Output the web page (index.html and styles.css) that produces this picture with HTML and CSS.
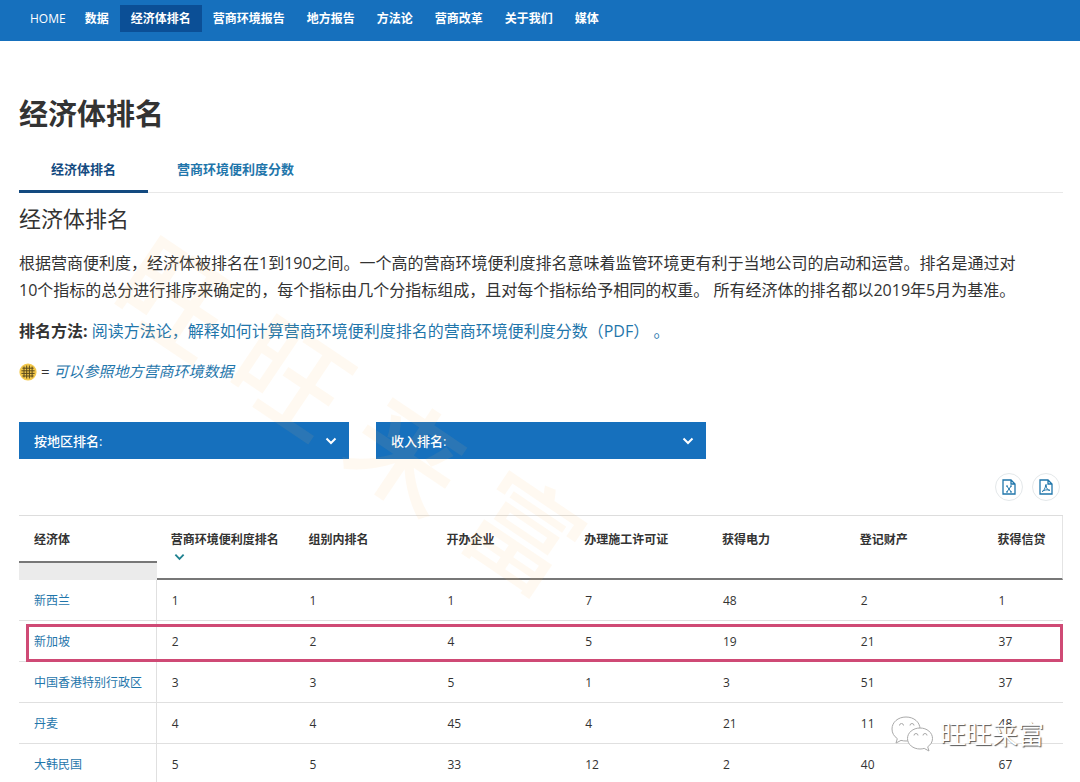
FILE: index.html
```html
<!DOCTYPE html>
<html lang="zh-CN">
<head>
<meta charset="utf-8">
<title>经济体排名</title>
<meta name="viewport" content="width=device-width, initial-scale=1">
<link rel="stylesheet" href="styles.css">
</head>
<body>
<header class="site-header">
  <nav class="nav">
    <a class="nav-link" href="#">HOME</a>
    <a class="nav-link" href="#">数据</a>
    <a class="nav-link nav-link-active" href="#" aria-current="page">经济体排名</a>
    <a class="nav-link" href="#">营商环境报告</a>
    <a class="nav-link" href="#">地方报告</a>
    <a class="nav-link" href="#">方法论</a>
    <a class="nav-link" href="#">营商改革</a>
    <a class="nav-link" href="#">关于我们</a>
    <a class="nav-link" href="#">媒体</a>
  </nav>
</header>

<main class="content">
  <h1 class="title">经济体排名</h1>
  <div class="tabs">
    <a class="tab tab-active" href="#">经济体排名</a>
    <a class="tab" href="#">营商环境便利度分数</a>
  </div>

  <h2 class="subtitle">经济体排名</h2>
  <p class="text">根据营商便利度，经济体被排名在1到190之间。一个高的营商环境便利度排名意味着监管环境更有利于当地公司的启动和运营。排名是通过对<br>10个指标的总分进行排序来确定的，每个指标由几个分指标组成，且对每个指标给予相同的权重。 所有经济体的排名都以2019年5月为基准。</p>
  <p class="text"><strong class="strong">排名方法:</strong> <a class="link" href="#">阅读方法论，解释如何计算营商环境便利度排名的营商环境便利度分数（PDF）</a> <span class="link">。</span></p>
  <p class="note">
    <svg class="globe" viewBox="0 0 18 18" aria-hidden="true">
      <circle cx="9" cy="9" r="8.6" fill="#f3c84b"/>
      <path d="M5 3.5v11M7.7 2.5v13M10.4 2.5v13M13.1 3.5v11M3.4 5.2h11.2M2.4 7.8h13.2M2.4 10.4h13.2M3.4 13h11.2" stroke="#5b4a1c" stroke-width="1" fill="none"/>
    </svg>
    <span>=</span>
    <a class="link note-link" href="#">可以参照地方营商环境数据</a>
  </p>

  <form class="filters">
    <div class="filter">
      <select class="filter-select" aria-label="按地区排名"><option>按地区排名:</option></select>
      <svg class="filter-arrow" viewBox="0 0 12 8" aria-hidden="true"><path d="M1.500 1.500L6 6l4.500-4.500"/></svg>
    </div>
    <div class="filter">
      <select class="filter-select" aria-label="收入排名"><option>收入排名:</option></select>
      <svg class="filter-arrow" viewBox="0 0 12 8" aria-hidden="true"><path d="M1.500 1.500L6 6l4.500-4.500"/></svg>
    </div>
  </form>

  <div class="exports">
    <button class="export" type="button" aria-label="Excel">
      <svg class="export-icon" viewBox="0 0 14 16" aria-hidden="true"><path d="M1 1h8l4 4v10H1zM9 1v4h4"/><path class="thin" d="M4.800 7l4.400 6M4 7h2M8 7h2M4 13h2M8 13h2M9.200 7l-4.400 6"/></svg>
    </button>
    <button class="export" type="button" aria-label="PDF">
      <svg class="export-icon" viewBox="0 0 14 16" aria-hidden="true"><path d="M1 1h8l4 4v10H1zM9 1v4h4"/><path class="thin" d="M3.200 12.500c1.500-.6 3.400-3.600 3.500-6.500 0-1 .9-.8.6.4-.5 2.600 1.700 5 3.600 4.900M3.200 12.500c2-1.600 5-2.200 7.700-1.200"/></svg>
    </button>
  </div>

  <table class="table">
    <colgroup>
      <col class="col"><col class="col"><col class="col"><col class="col"><col class="col"><col class="col"><col class="col"><col>
    </colgroup>
    <thead>
      <tr>
        <th class="head head-first" scope="col"><div class="head-box">经济体</div></th>
        <th class="head" scope="col">营商环境便利度排名
          <button class="sort" type="button" aria-label="排序"><svg class="sort-icon" viewBox="0 0 12 8" aria-hidden="true"><path d="M1.500 1.500L6 6l4.500-4.500"/></svg></button>
        </th>
        <th class="head" scope="col">组别内排名</th>
        <th class="head" scope="col">开办企业</th>
        <th class="head" scope="col">办理施工许可证</th>
        <th class="head" scope="col">获得电力</th>
        <th class="head" scope="col">登记财产</th>
        <th class="head head-last" scope="col">获得信贷</th>
      </tr>
    </thead>
    <tbody>
      <tr class="row"><td class="cell name"><a class="link" href="#">新西兰</a></td><td class="cell">1</td><td class="cell">1</td><td class="cell">1</td><td class="cell">7</td><td class="cell">48</td><td class="cell">2</td><td class="cell">1</td></tr>
      <tr class="row"><td class="cell name marked"><a class="link" href="#">新加坡</a></td><td class="cell">2</td><td class="cell">2</td><td class="cell">4</td><td class="cell">5</td><td class="cell">19</td><td class="cell">21</td><td class="cell">37</td></tr>
      <tr class="row"><td class="cell name"><a class="link" href="#">中国香港特别行政区</a></td><td class="cell">3</td><td class="cell">3</td><td class="cell">5</td><td class="cell">1</td><td class="cell">3</td><td class="cell">51</td><td class="cell">37</td></tr>
      <tr class="row"><td class="cell name"><a class="link" href="#">丹麦</a></td><td class="cell">4</td><td class="cell">4</td><td class="cell">45</td><td class="cell">4</td><td class="cell">21</td><td class="cell">11</td><td class="cell">48</td></tr>
      <tr class="row"><td class="cell name"><a class="link" href="#">大韩民国</a></td><td class="cell">5</td><td class="cell">5</td><td class="cell">33</td><td class="cell">12</td><td class="cell">2</td><td class="cell">40</td><td class="cell">67</td></tr>
    </tbody>
  </table>
</main>

<div class="watermark" aria-hidden="true"><span>旺</span><span>旺</span><span>来</span><span>富</span></div>

<div class="signature">
  <svg class="signature-icon" viewBox="0 0 44 38" aria-hidden="true">
    <path d="M16 2C8 2 2 7.200 2 14c0 4 2 7.300 5.300 9.600L6 28l5-2.600c1.600.4 3.300.6 5 .6 8 0 14-5.200 14-12S24 2 16 2z"/>
    <path d="M30 13c-7 0-12.500 4.600-12.500 10.500S23 34 30 34c1.500 0 2.900-.2 4.200-.6L39 36l-1.300-4.200c3-2 4.800-4.900 4.800-8.300C42.500 17.600 37 13 30 13z"/>
    <path class="eyes" d="M9.500 10.500a2 2 0 0 1 4 0M20 10.500a2 2 0 0 1 4 0M24 20.500a2 2 0 0 1 4 0M33 20.500a2 2 0 0 1 4 0"/>
  </svg>
  <span>旺旺来富</span>
</div>
</body>
</html>
```

FILE: styles.css
```css
* {
  box-sizing: border-box;
}

body {
  position: relative;
  margin: 0;
  background: #fff;
  color: #333;
  font-family: "Open Sans", "Noto Sans CJK SC", sans-serif;
  font-size: 12px;
  text-spacing-trim: space-all;
}

a {
  text-decoration: none;
}

.site-header {
  padding: 5px 19px 9px;
  background: #1670bd;
}

.nav {
  display: flex;
}

.nav-link {
  padding: 0 11px;
  color: #fff;
  font-size: 12px;
  font-weight: 700;
  line-height: 27px;
}

.nav-link:first-child {
  padding-right: 8px;
  font-weight: 500;
}

.nav-link-active {
  background: #0b4f96;
}

.content {
  padding: 52px 17px 0 19px;
}

.title {
  margin: 0;
  font-size: 29px;
  font-weight: 700;
  line-height: 42px;
}

.tabs {
  display: flex;
  margin-top: 14px;
  border-bottom: 1px solid #e8e8e8;
}

.tab {
  margin-bottom: -1px;
  padding: 0 29px;
  border-bottom: 3px solid transparent;
  color: #1f76ab;
  font-size: 13px;
  font-weight: 700;
  line-height: 41px;
}

.tab-active {
  padding: 0 32px;
  border-color: #134a80;
  color: #134a80;
}

.subtitle {
  margin: 9px 0 0;
  font-size: 22px;
  font-weight: 400;
  line-height: 33px;
}

.text {
  margin: 14px 0 0;
  font-size: 16px;
  line-height: 27px;
}

.subtitle + .text {
  margin-top: 15px;
}

.strong {
  font-weight: 700;
}

.link {
  color: #1f76ab;
}

.note {
  display: flex;
  align-items: center;
  gap: 4px;
  margin: 13px 0 0;
  font-size: 15px;
  line-height: 27px;
}

.note-link {
  font-style: italic;
}

.globe {
  width: 18px;
  height: 18px;
}

.filters {
  display: grid;
  grid-template-columns: repeat(3, 1fr);
  gap: 27px;
  margin-top: 37px;
}

.filter {
  position: relative;
}

.filter-select {
  display: block;
  width: 100%;
  height: 37px;
  padding: 0 15px;
  border: 0;
  border-radius: 0;
  appearance: none;
  background: #1670bd;
  color: #fff;
  font-family: inherit;
  font-size: 13px;
  font-weight: 500;
}

.filter-arrow {
  position: absolute;
  top: 15px;
  right: 12px;
  width: 12px;
  height: 8px;
  fill: none;
  stroke: #fff;
  stroke-width: 2;
  pointer-events: none;
}

.exports {
  display: flex;
  justify-content: flex-end;
  gap: 9px;
  margin-top: 14px;
  padding-right: 3px;
}

.export {
  display: flex;
  align-items: center;
  justify-content: center;
  width: 28px;
  height: 28px;
  padding: 0;
  border: 1px solid #e4e8ea;
  border-radius: 50%;
  background: #fff;
}

.export-icon {
  width: 14px;
  height: 16px;
  fill: none;
  stroke: #1f76ab;
  stroke-width: 1.3;
}

.thin {
  stroke-width: 1;
}

.table {
  width: 100%;
  margin-top: 14px;
  border-spacing: 0;
  table-layout: fixed;
  border-top: 1px solid #ddd;
}

.col {
  width: 13.2%;
}

.head {
  height: 64px;
  padding: 15px 0 0 14px;
  border-bottom: 2px solid #777;
  font-size: 12px;
  font-weight: 700;
  line-height: 18px;
  text-align: left;
  vertical-align: top;
  white-space: nowrap;
}

.head-first {
  padding: 0;
  border-bottom: 0;
  background: #ebebeb;
}

.head-box {
  height: 47px;
  padding: 15px 0 0 15px;
  border-bottom: 2px solid #777;
  background: #fff;
}

.head-last {
  border-right: 1px solid #e4e4e4;
}

.sort {
  display: block;
  padding: 0 3px;
  border: 0;
  background: none;
}

.sort-icon {
  display: block;
  width: 11px;
  height: 16px;
  fill: none;
  stroke: #1f8290;
  stroke-width: 2;
}

.row {
  position: relative;
}

.cell {
  height: 41px;
  padding: 2px 0 0 15px;
  border-bottom: 1px solid #e0e0e0;
  font-size: 12px;
  line-height: 18px;
}

.name {
  border-right: 1px solid #e0e0e0;
  white-space: nowrap;
}

.marked::after {
  position: absolute;
  inset: 3px 0 0 7px;
  border: 3px solid #cf4a75;
  content: "";
  pointer-events: none;
}

.watermark {
  position: absolute;
  top: 335px;
  left: 84px;
  display: flex;
  gap: 28px;
  color: rgba(255, 190, 100, 0.09);
  font-size: 112px;
  font-weight: 500;
  line-height: 160px;
  transform: rotate(34deg);
  pointer-events: none;
  user-select: none;
}

.signature {
  position: absolute;
  right: 36px;
  top: 715px;
  display: flex;
  align-items: center;
  gap: 6px;
  color: #fff;
  font-size: 26px;
  line-height: 38px;
  text-shadow: 1px 1px 1px #555;
  pointer-events: none;
}

.signature-icon {
  width: 44px;
  height: 38px;
  fill: #fff;
  stroke: #aaa;
  stroke-width: 1;
}

.eyes {
  fill: none;
}
```
